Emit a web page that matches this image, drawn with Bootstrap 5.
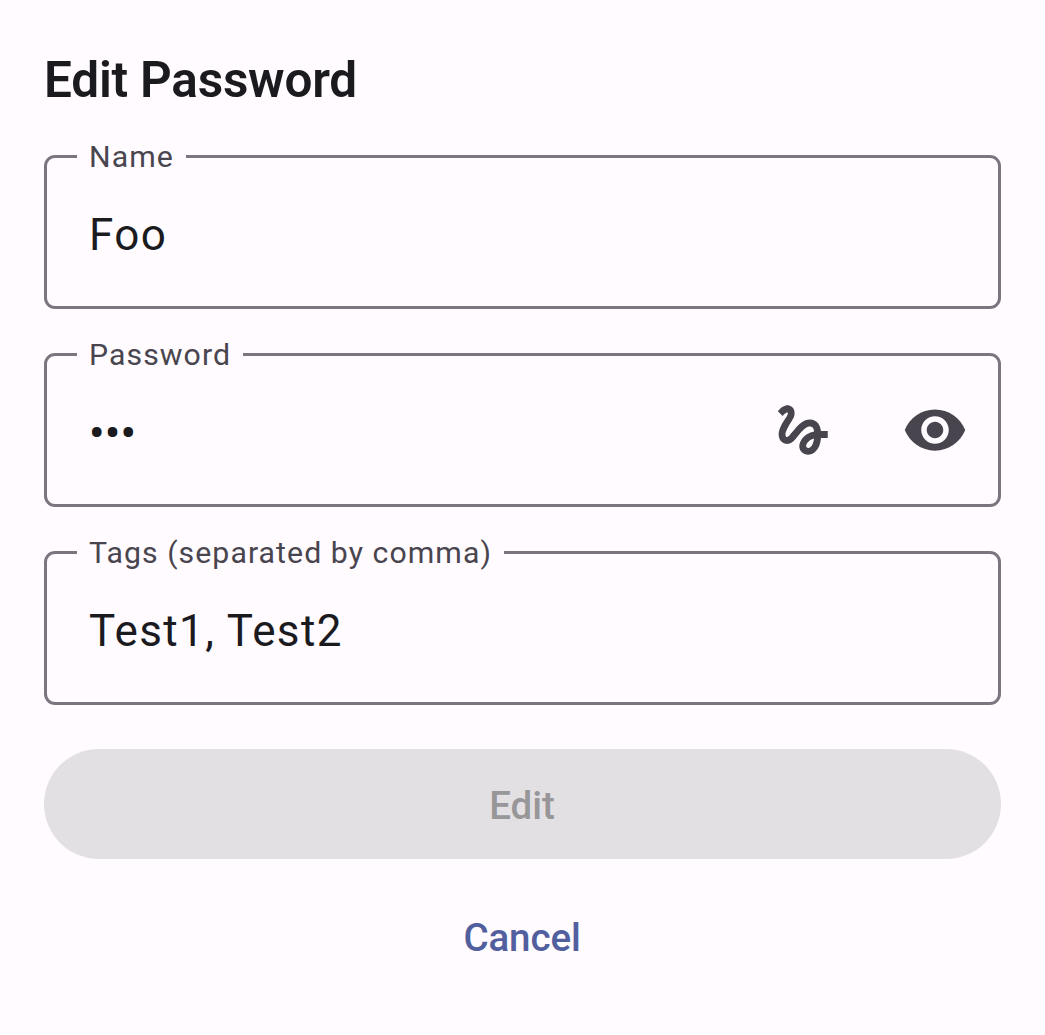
<!DOCTYPE html>
<html lang="en">
<head>
<meta charset="utf-8">
<meta name="viewport" content="width=device-width, initial-scale=1">
<title>Edit Password</title>
<link href="https://cdn.jsdelivr.net/npm/bootstrap@5.3.0/dist/css/bootstrap.min.css" rel="stylesheet">
<style>
  body { background: #fffbff; color: #1b1b1f; font-family: Roboto, sans-serif; }
  .sheet { padding: 44px; height: 1035px; }
  .sheet-title { font-size: 49.5px; font-weight: 600; line-height: 66px; letter-spacing: -0.22px; margin: 3px 0 42px; }
  .fields { gap: 44px; }
  .outlined { height: 154px; border: 3px solid #7b757f; border-radius: 11px; padding: 0 30px 0 42px; }
  .outlined-label { top: -21px; left: 30px; padding: 0 12px; height: 36px; line-height: 40px; font-size: 30.25px; letter-spacing: 1.05px; background: #fffbff; color: #49454f; white-space: nowrap; }
  .outlined-value { font-size: 44px; line-height: 66px; letter-spacing: 1.375px; margin-top: 6px; }
  .outlined-secret { font-weight: 500; letter-spacing: .4px; }
  .field-icons { gap: 66px; }
  .field-icons svg { width: 66px; height: 66px; fill: #49454f; display: block; }
  .action { height: 110px; border: 0; padding: 8px 13px 6px 12px; font-size: 38.5px; font-weight: 500; line-height: 55px; }
  .action-edit, .action-edit:disabled { background: #e2e0e3; color: #979699; opacity: 1; margin-top: 44px; }
  .action-cancel { color: #525f9e; margin-top: 22px; letter-spacing: -.1px; }
</style>
<script src="https://cdn.jsdelivr.net/npm/bootstrap@5.3.0/dist/js/bootstrap.bundle.min.js"></script>
</head>
<body>
<main class="sheet d-flex flex-column">
  <h1 class="sheet-title">Edit Password</h1>
  <div class="fields d-flex flex-column">
    <div class="outlined position-relative d-flex align-items-center">
      <span class="outlined-label position-absolute">Name</span>
      <span class="outlined-value">Foo</span>
    </div>
    <div class="outlined position-relative d-flex align-items-center justify-content-between">
      <span class="outlined-label position-absolute">Password</span>
      <span class="outlined-value outlined-secret">•••</span>
      <div class="field-icons d-flex">
        <svg viewBox="0 0 24 24" aria-hidden="true"><path d="M4.59 6.89c.7-.71 1.4-1.35 1.71-1.22.5.2 0 1.03-.3 1.52-.25.42-2.86 3.89-2.86 6.31 0 1.28.48 2.34 1.34 2.98.75.56 1.74.73 2.64.46 1.07-.31 1.95-1.4 3.06-2.77 1.21-1.49 2.83-3.44 4.08-3.44 1.63 0 1.65 1.01 1.76 1.79-3.78.64-5.38 3.67-5.38 5.37 0 1.7 1.44 3.09 3.21 3.09 1.63 0 4.29-1.33 4.69-6.1H21v-2.5h-2.47c-.15-1.65-1.09-4.2-4.03-4.2-2.25 0-4.18 1.91-4.94 2.84-.58.73-2.06 2.48-2.29 2.72-.25.3-.68.84-1.11.84-.45 0-.72-.83-.36-1.92.35-1.09 1.4-2.86 1.85-3.52.78-1.14 1.3-1.92 1.3-3.28C8.95 3.69 7.31 3 6.44 3 5.12 3 3.97 4 3.72 4.25c-.36.36-.66.66-.88.93l1.75 1.71zm9.29 11.66c-.31 0-.74-.26-.74-.72 0-.6.73-2.2 2.87-2.76-.3 2.69-1.43 3.48-2.13 3.48z"/></svg>
        <svg viewBox="0 0 24 24" aria-hidden="true"><path d="M12 4.5C7 4.5 2.73 7.61 1 12c1.73 4.39 6 7.5 11 7.5s9.27-3.11 11-7.5c-1.73-4.39-6-7.5-11-7.5zM12 17c-2.76 0-5-2.24-5-5s2.24-5 5-5 5 2.24 5 5-2.24 5-5 5zm0-8c-1.66 0-3 1.34-3 3s1.34 3 3 3 3-1.34 3-3-1.34-3-3-3z"/></svg>
      </div>
    </div>
    <div class="outlined position-relative d-flex align-items-center">
      <span class="outlined-label position-absolute">Tags (separated by comma)</span>
      <span class="outlined-value">Test1, Test2</span>
    </div>
  </div>
  <button type="button" class="action action-edit btn rounded-pill w-100" disabled>Edit</button>
  <button type="button" class="action action-cancel btn rounded-pill w-100">Cancel</button>
</main>
</body>
</html>
